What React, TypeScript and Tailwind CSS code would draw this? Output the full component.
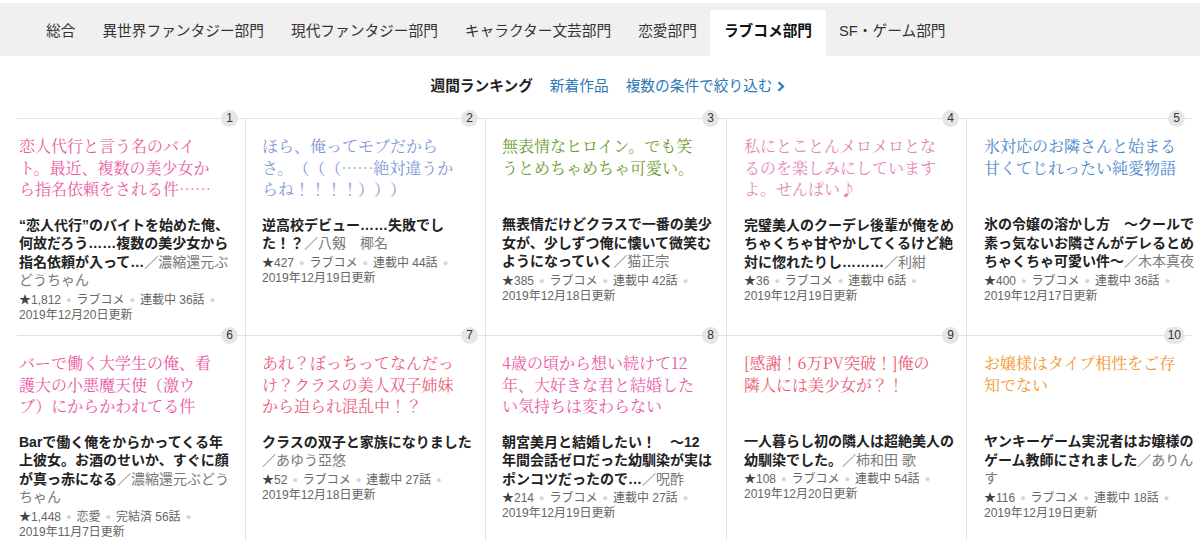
import React from "react";

type Card = {
  n: number;
  color: string;
  catchLines: string[];
  title: [string, string?][];
  star: string;
  genre: string;
  status: string;
  date: string;
};

const row1: Card[] = [
  {
    n: 1,
    color: "#ec5ba2",
    catchLines: ["恋人代行と言う名のバイ", "ト。最近、複数の美少女か", "ら指名依頼をされる件……"],
    title: [["“恋人代行”のバイトを始めた俺、"], ["何故だろう……複数の美少女から"], ["指名依頼が入って…", "／濃縮還元ぶ"], ["", "どうちゃん"]],
    star: "1,812",
    genre: "ラブコメ",
    status: "連載中 36話",
    date: "2019年12月20日更新",
  },
  {
    n: 2,
    color: "#7f97d4",
    catchLines: ["ほら、俺ってモブだから", "さ。（（（……絶対違うか", "らね！！！！）））"],
    title: [["逆高校デビュー……失敗でし"], ["た！？", "／八剱　椰名"]],
    star: "427",
    genre: "ラブコメ",
    status: "連載中 44話",
    date: "2019年12月19日更新",
  },
  {
    n: 3,
    color: "#6c9c30",
    catchLines: ["無表情なヒロイン。でも笑", "うとめちゃめちゃ可愛い。"],
    title: [["無表情だけどクラスで一番の美少"], ["女が、少しずつ俺に懐いて微笑む"], ["ようになっていく", "／猫正宗"]],
    star: "385",
    genre: "ラブコメ",
    status: "連載中 42話",
    date: "2019年12月18日更新",
  },
  {
    n: 4,
    color: "#e386b7",
    catchLines: ["私にとことんメロメロとな", "るのを楽しみにしています", "よ。せんぱい♪"],
    title: [["完璧美人のクーデレ後輩が俺をめ"], ["ちゃくちゃ甘やかしてくるけど絶"], ["対に惚れたりし………", "／利紺"]],
    star: "36",
    genre: "ラブコメ",
    status: "連載中 6話",
    date: "2019年12月19日更新",
  },
  {
    n: 5,
    color: "#4a86c6",
    catchLines: ["氷対応のお隣さんと始まる", "甘くてじれったい純愛物語"],
    title: [["氷の令嬢の溶かし方　～クールで"], ["素っ気ないお隣さんがデレるとめ"], ["ちゃくちゃ可愛い件～", "／木本真夜"]],
    star: "400",
    genre: "ラブコメ",
    status: "連載中 36話",
    date: "2019年12月17日更新",
  },
];

const row2: Card[] = [
  {
    n: 6,
    color: "#e9579f",
    catchLines: ["バーで働く大学生の俺、看", "護大の小悪魔天使（激ウ", "ブ）にからかわれてる件"],
    title: [["Barで働く俺をからかってくる年"], ["上彼女。お酒のせいか、すぐに顔"], ["が真っ赤になる", "／濃縮還元ぶどう"], ["", "ちゃん"]],
    star: "1,448",
    genre: "恋愛",
    status: "完結済 56話",
    date: "2019年11月7日更新",
  },
  {
    n: 7,
    color: "#e95d7a",
    catchLines: ["あれ？ぼっちってなんだっ", "け？クラスの美人双子姉妹", "から迫られ混乱中！？"],
    title: [["クラスの双子と家族になりました"], ["", "／あゆう亞悠"]],
    star: "52",
    genre: "ラブコメ",
    status: "連載中 27話",
    date: "2019年12月18日更新",
  },
  {
    n: 8,
    color: "#ea5aa6",
    catchLines: ["4歳の頃から想い続けて12", "年、大好きな君と結婚した", "い気持ちは変わらない"],
    title: [["朝宮美月と結婚したい！　～12"], ["年間会話ゼロだった幼馴染が実は"], ["ポンコツだったので…", "／呪酢"]],
    star: "214",
    genre: "ラブコメ",
    status: "連載中 27話",
    date: "2019年12月19日更新",
  },
  {
    n: 9,
    color: "#ea5a70",
    catchLines: ["[感謝！6万PV突破！]俺の", "隣人には美少女が？！"],
    title: [["一人暮らし初の隣人は超絶美人の"], ["幼馴染でした。", "／柿和田 歌"]],
    star: "108",
    genre: "ラブコメ",
    status: "連載中 54話",
    date: "2019年12月20日更新",
  },
  {
    n: 10,
    color: "#f3952c",
    catchLines: ["お嬢様はタイプ相性をご存", "知でない"],
    title: [["ヤンキーゲーム実況者はお嬢様の"], ["ゲーム教師にされました", "／ありん"], ["", "す"]],
    star: "116",
    genre: "ラブコメ",
    status: "連載中 18話",
    date: "2019年12月19日更新",
  },
];

const tabs = ["総合", "異世界ファンタジー部門", "現代ファンタジー部門", "キャラクター文芸部門", "恋愛部門", "ラブコメ部門", "SF・ゲーム部門"];

function Dot() {
  return <span className="mx-[5px] text-[#d4d4d4] text-[9px] align-[1px]">●</span>;
}

function CardCell({ card, idx }: { card: Card; idx: number }) {
  const widthCls =
    idx === 0
      ? "w-[228px] pl-[2px]"
      : idx === 1
      ? "w-[240px] border-l border-[#e2e2e2] pl-[16px]"
      : idx === 2
      ? "w-[241px] border-l border-[#e2e2e2] pl-[16px]"
      : idx === 3
      ? "w-[240px] border-l border-[#e2e2e2] pl-[17px]"
      : "w-[226px] border-l border-[#e2e2e2] pl-[17px]";
  return (
    <div className={`relative shrink-0 ${widthCls}`}>
      <div className="absolute top-[-9px] right-[7px] h-[17px] min-w-[17px] px-[4px] rounded-full bg-[#e6e6e6] text-[12px] leading-[17px] text-[#333] text-center font-['Liberation_Sans',sans-serif]">
        {card.n}
      </div>
      <div
        className="pt-[16px] min-h-[80px] text-[16px] leading-[21.5px] font-['Noto_Serif_CJK_JP','Liberation_Serif','Noto_Sans_CJK_JP',serif] whitespace-nowrap"
        style={{ color: card.color }}
      >
        {card.catchLines.map((l, i) => (
          <div key={i}>{l}</div>
        ))}
      </div>
      <div className="mt-[16px] text-[14px] leading-[18.5px] whitespace-nowrap">
        {card.title.map((l, i) => (
          <div key={i}>
            <span className="font-bold text-[#222]">{l[0]}</span>
            {l[1] ? <span className="text-[#7a7a7a]">{l[1]}</span> : null}
          </div>
        ))}
      </div>
      <div className="mt-[3px] text-[12px] leading-[15px] text-[#666] whitespace-nowrap">
        <div>
          <span className="text-[#444]">★</span>
          {card.star}
          <Dot />
          {card.genre}
          <Dot />
          {card.status}
          <Dot />
        </div>
        <div>{card.date}</div>
      </div>
    </div>
  );
}

export default function App() {
  return (
    <div className="w-[1200px] h-[540px] overflow-hidden bg-white font-['Liberation_Sans','Noto_Sans_CJK_JP',sans-serif] text-[#333] [text-spacing-trim:space-all]">
      <div className="pt-[3px]">
        <nav className="h-[53px] bg-[#f0f0f0] flex items-end pl-[32.5px] text-[14.7px]">
          {tabs.map((t) =>
            t === "ラブコメ部門" ? (
              <div key={t} className="h-[46px] px-[13.5px] flex items-center pb-[4px] bg-white font-bold text-[#111]">
                {t}
              </div>
            ) : (
              <div key={t} className="h-[46px] px-[13.5px] flex items-center pb-[4px] text-[#333]">
                {t}
              </div>
            )
          )}
        </nav>
      </div>

      <div className="mt-[20px] h-[20px] flex items-center justify-center pl-[15px] text-[14.7px] leading-[20px] gap-[17px]">
        <span className="font-bold text-[#222]">週間ランキング</span>
        <span className="text-[#2d79b6]">新着作品</span>
        <span className="text-[#2d79b6] flex items-center gap-[4px]">
          複数の条件で絞り込む
          <svg width="8" height="11" viewBox="0 0 8 11" className="mt-[1px]">
            <path d="M1.5 1.2 L6 5.5 L1.5 9.8" fill="none" stroke="#2d79b6" strokeWidth="2.2" />
          </svg>
        </span>
      </div>

      <div className="mt-[22px] ml-[17px] w-[1175px]">
        <div className="flex border-t border-[#e2e2e2] h-[217px]">
          {row1.map((c, i) => (
            <CardCell key={c.n} card={c} idx={i} />
          ))}
        </div>
        <div className="flex border-t border-[#e2e2e2] h-[240px]">
          {row2.map((c, i) => (
            <CardCell key={c.n} card={c} idx={i} />
          ))}
        </div>
      </div>
    </div>
  );
}
